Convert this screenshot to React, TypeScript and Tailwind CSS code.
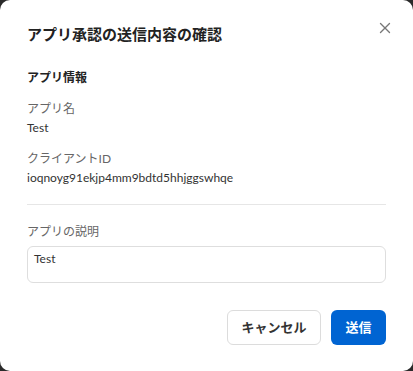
import { X } from 'lucide-react'

// Confirmation dialog for app approval submission
export default function App() {
  return (
    <div className="h-[371px] w-[413px] bg-[#2a2a2a] font-['Lato','Noto_Sans_CJK_JP',sans-serif]">
      <div className="relative flex h-full w-full flex-col rounded-[10px] bg-white px-[27px] pt-[24px] text-[#333]">
        <button className="absolute right-[19px] top-[19px] text-[#777]">
          <X size={18} strokeWidth={1.8} />
        </button>

        <h2 className="text-[15px] font-bold leading-[20px] text-[#222]">アプリ承認の送信内容の確認</h2>

        <h3 className="mt-[25px] text-[12px] font-bold leading-[18px] text-[#222]">アプリ情報</h3>

        <div className="mt-[12px] text-[12px] leading-[19px]">
          <p className="text-[#666]">アプリ名</p>
          <p className="text-[#333]">Test</p>
        </div>

        <div className="mt-[12px] text-[12px] leading-[19px]">
          <p className="text-[#666]">クライアントID</p>
          <p className="text-[#333]">ioqnoyg91ekjp4mm9bdtd5hhjggswhqe</p>
        </div>

        <hr className="mt-[17px] border-t border-[#e6e6e6]" />

        <p className="mt-[17px] text-[12px] leading-[19px] text-[#666]">アプリの説明</p>
        <div className="mt-[5px] h-[37px] rounded-[6px] border border-[#dedede] px-[6px] pt-[3px] text-[12px] leading-[18px] text-[#333]">
          Test
        </div>

        <div className="mt-[27px] flex justify-end gap-[10px]">
          <button className="h-[35px] w-[94px] rounded-[6px] border border-[#dcdcdc] bg-white text-[13px] font-bold text-[#333]">
            キャンセル
          </button>
          <button className="h-[35px] w-[55px] rounded-[6px] bg-[#0064d2] text-[13px] font-bold text-white">
            送信
          </button>
        </div>
      </div>
    </div>
  )
}
